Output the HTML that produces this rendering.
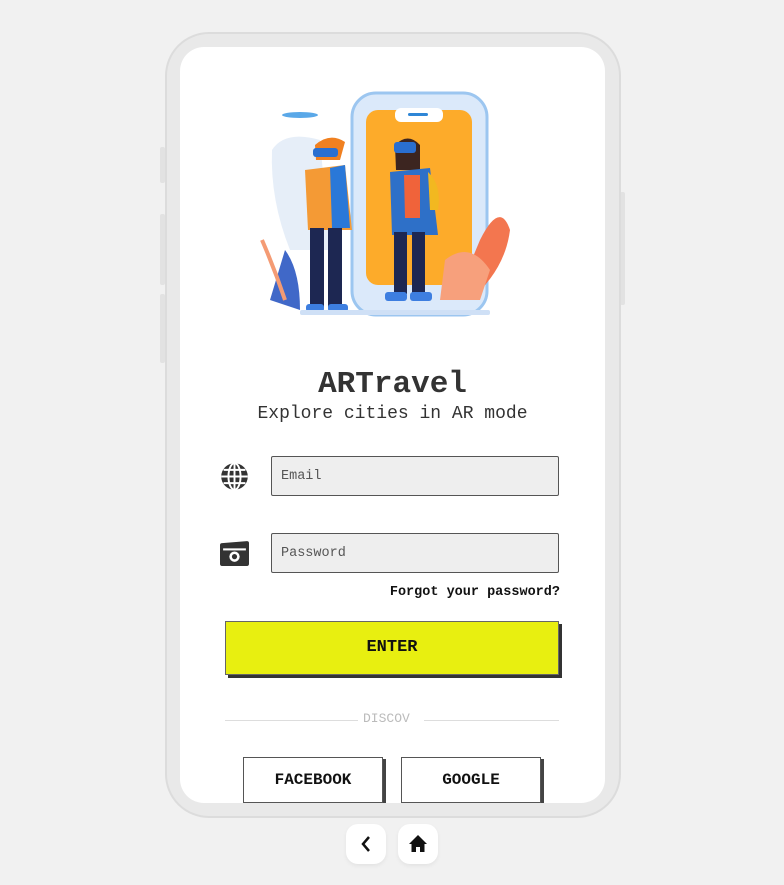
<!DOCTYPE html>
<html><head><meta charset="utf-8"><style>
*{margin:0;padding:0;box-sizing:border-box}
body{width:784px;height:885px;background:#f1f1f1;position:relative;overflow:hidden;font-family:"Liberation Mono",monospace}
.frame{position:absolute;left:165px;top:32px;width:456px;height:786px;border-radius:44px;background:#e9e9e9;border:2px solid #dcdcdc}
.screen{position:absolute;left:180px;top:47px;width:425px;height:756px;border-radius:24px;background:#fff;overflow:hidden}
.btn{position:absolute;background:#e2e2e2;border-radius:2px}
.abs{position:absolute}
.title{left:0;width:425px;top:320px;text-align:center;font-size:31px;font-weight:bold;color:#333}
.sub{left:0;width:425px;top:357px;text-align:center;font-size:18px;color:#333}
.inp{position:absolute;left:91px;width:288px;height:40px;background:#eee;border:1.5px solid #555;border-radius:2px;font-size:13.5px;color:#555;padding:12px 0 0 9px}
.forgot{right:45px;top:538px;font-size:13.5px;font-weight:bold;color:#111}
.enter{position:absolute;left:45px;top:574px;width:334px;height:54px;background:#e8ef10;border:1.5px solid #666;box-shadow:3px 3px 0 #333;font-weight:bold;font-size:17px;text-align:center;line-height:52px;color:#111}
.line{position:absolute;top:673px;height:1px;background:#ddd}
.disc{left:183px;top:664px;font-size:13px;color:#bbb}
.sbtn{position:absolute;top:710px;width:140px;height:46px;border:1.5px solid #555;box-shadow:3px 2px 0 #444;background:#fff;font-weight:bold;font-size:16px;text-align:center;line-height:44px;color:#111}
.nav{position:absolute;top:824px;width:40px;height:40px;background:#fff;border-radius:12px;box-shadow:0 2px 4px rgba(0,0,0,.06)}
</style></head><body>
<div class="btn" style="left:160px;top:147px;width:5px;height:36px"></div>
<div class="btn" style="left:160px;top:214px;width:5px;height:71px"></div>
<div class="btn" style="left:160px;top:294px;width:5px;height:69px"></div>
<div class="btn" style="left:620px;top:192px;width:5px;height:113px"></div>
<div class="frame"></div>
<div class="screen">
<svg class="abs" style="left:0;top:0" width="425" height="300" viewBox="180 47 425 300">
<ellipse cx="300" cy="115" rx="18" ry="3" fill="#5aa8e8"/>
<path d="M272 150 Q285 130 320 140 L330 250 L290 250 Q270 200 272 150Z" fill="#e6eef8"/>
<rect x="352" y="93" width="135" height="222" rx="24" fill="#dbe9fa" stroke="#9cc6f0" stroke-width="3"/>
<rect x="366" y="110" width="106" height="175" rx="12" fill="#fdab2a"/>
<rect x="395" y="108" width="48" height="14" rx="6" fill="#fff"/>
<rect x="408" y="113" width="20" height="3" rx="1.5" fill="#2f86d6"/>
<path d="M480 240 Q500 200 510 230 Q505 270 470 300 L455 300Z" fill="#f3764f"/>
<path d="M445 260 Q470 240 490 270 L480 300 L440 300Z" fill="#f7a07c"/>
<path d="M285 250 Q300 270 300 310 L270 300Z" fill="#4068c8"/>
<path d="M262 240 Q275 270 285 300" stroke="#f49b74" stroke-width="4" fill="none"/>
<path d="M315 145 Q330 132 345 142 L340 160 L316 160Z" fill="#f08020"/>
<rect x="313" y="148" width="25" height="9" rx="3" fill="#2a6fd0"/>
<path d="M305 170 L345 165 L352 230 L308 230Z" fill="#f49a35"/>
<path d="M330 168 L345 165 L350 228 L332 228Z" fill="#2a78d8"/>
<rect x="310" y="228" width="14" height="80" fill="#1d2752"/>
<rect x="328" y="228" width="14" height="80" fill="#1d2752"/>
<rect x="306" y="304" width="18" height="8" rx="3" fill="#3d7ee0"/>
<rect x="328" y="304" width="20" height="8" rx="3" fill="#3d7ee0"/>
<path d="M395 145 Q408 132 420 145 L420 170 L396 170Z" fill="#3c2520"/>
<rect x="394" y="142" width="22" height="11" rx="3" fill="#2a6fd0"/>
<path d="M390 172 L430 168 L438 235 L392 235Z" fill="#2e70c8"/>
<path d="M404 175 L420 175 L420 218 L405 218Z" fill="#f0633a"/>
<path d="M428 172 Q442 185 438 210 L430 210Z" fill="#f2b820"/>
<rect x="394" y="232" width="13" height="62" fill="#1d2752"/>
<rect x="412" y="232" width="13" height="62" fill="#1d2752"/>
<rect x="385" y="292" width="22" height="9" rx="3" fill="#3d7ee0"/>
<rect x="410" y="292" width="22" height="9" rx="3" fill="#3d7ee0"/>
<rect x="300" y="310" width="190" height="5" rx="2" fill="#cfe0f6"/>
</svg>
<div class="abs title">ARTravel</div>
<div class="abs sub">Explore cities in AR mode</div>
<svg class="abs" style="left:40px;top:415px" width="29" height="29" viewBox="0 0 24 24"><circle cx="12" cy="12" r="11" fill="#333"/><path d="M1 12H23M12 1V23M3 6.5H21M3 17.5H21" stroke="#fff" stroke-width="1.6"/><ellipse cx="12" cy="12" rx="5" ry="11" fill="none" stroke="#fff" stroke-width="1.6"/></svg>
<div class="inp" style="top:409px">Email</div>
<svg class="abs" style="left:40px;top:492px" width="29" height="27" viewBox="0 0 28 26"><path d="M2 4 L26 2 Q28 2 28 4 L28 24 Q28 26 26 26 L2 26 Q0 26 0 24 L0 6 Q0 4 2 4Z" fill="#333"/><rect x="3" y="9" width="22" height="2" fill="#fff"/><circle cx="14" cy="17" r="5" fill="#fff"/><circle cx="14" cy="17" r="2.5" fill="#333"/></svg>
<div class="inp" style="top:486px">Password</div>
<div class="abs forgot">Forgot your password?</div>
<div class="enter">ENTER</div>
<div class="line" style="left:45px;width:133px"></div>
<div class="abs disc">DISCOV</div>
<div class="line" style="left:244px;width:135px"></div>
<div class="sbtn" style="left:63px">FACEBOOK</div>
<div class="sbtn" style="left:221px">GOOGLE</div>
</div>
<div class="nav" style="left:346px"><svg width="40" height="40"><path d="M23 13 L17 20 L23 27" stroke="#111" stroke-width="2.5" fill="none"/></svg></div>
<div class="nav" style="left:398px"><svg width="40" height="40"><path d="M20 11 L29 20 L26.5 20 L26.5 28 L22 28 L22 23 L18 23 L18 28 L13.5 28 L13.5 20 L11 20Z" fill="#111"/></svg></div>
</body></html>
